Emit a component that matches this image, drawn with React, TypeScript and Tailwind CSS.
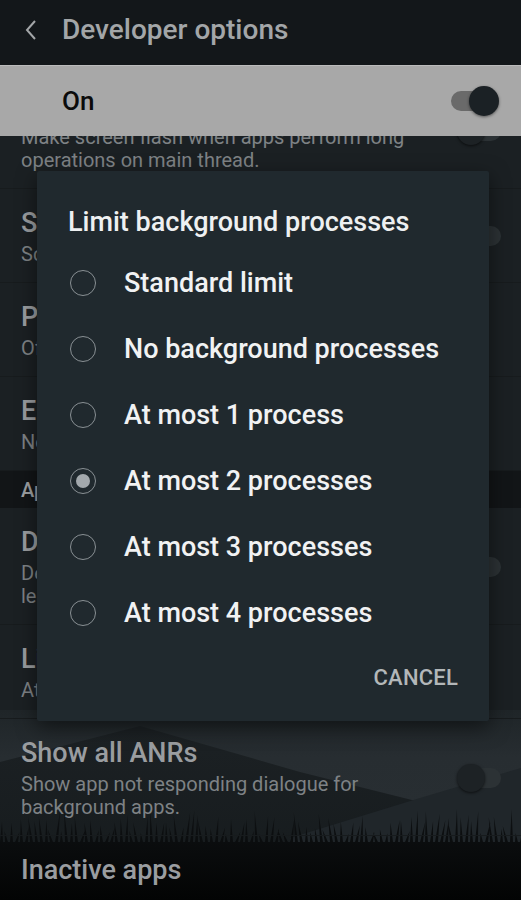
import React from "react";

type Row = { title: string; sub: string[]; toggle?: "off" | "none" };

const rowsTop: Row[] = [
  { title: "Strict mode enabled", sub: ["Make screen flash when apps perform long", "operations on main thread."], toggle: "off" },
  { title: "Show CPU usage", sub: ["Screen overlay showing current CPU usage"], toggle: "off" },
  { title: "Profile GPU rendering", sub: ["Off"], toggle: "none" },
  { title: "Enable OpenGL traces", sub: ["None"], toggle: "none" },
];

const rowsBottom: Row[] = [
  { title: "Don't keep activities", sub: ["Destroy every activity as soon as the user", "leaves it"], toggle: "off" },
  { title: "Limit background processes", sub: ["At most 2 processes"], toggle: "none" },
  { title: "Show all ANRs", sub: ["Show app not responding dialogue for", "background apps."], toggle: "off" },
  { title: "Inactive apps", sub: [], toggle: "none" },
];

const options = [
  "Standard limit",
  "No background processes",
  "At most 1 process",
  "At most 2 processes",
  "At most 3 processes",
  "At most 4 processes",
];

// thin grass blades along the bottom of the wallpaper
const grass = (() => {
  let d = "M0 190 L0 130 ";
  let seed = 7;
  const rnd = () => {
    seed = (seed * 9301 + 49297) % 233280;
    return seed / 233280;
  };
  for (let x = 0; x < 521; x += 5) {
    const h = 8 + rnd() * 26;
    const lean = (rnd() - 0.5) * 8;
    d += `L${x} 132 L${(x + 1.5 + lean).toFixed(1)} ${(132 - h).toFixed(1)} L${x + 3} 132 `;
  }
  d += "L521 130 L521 190 Z";
  return d;
})();

const SmallToggle = () => (
  <div className="relative w-[46px] h-[28px] shrink-0">
    <div className="absolute left-[6px] right-[2px] top-[4px] h-[20px] rounded-full bg-[#2c3235]" />
    <div className="absolute left-0 top-0 w-[28px] h-[28px] rounded-full bg-[#1d2225] shadow-[0_1px_3px_rgba(0,0,0,0.6)]" />
  </div>
);

const SettingRow = ({ row }: { row: Row }) => (
  <div className="flex items-center pl-[21px] pr-[18px] pt-[17px] pb-[16px] border-b border-[#171b1d]">
    <div className="flex-1 min-w-0">
      <div className="text-[27px] leading-[34px] font-medium text-[#9a9da0] whitespace-nowrap">{row.title}</div>
      {row.sub.length > 0 && (
        <div className="mt-[3px] text-[20px] leading-[23px] text-[#7e8285]">
          {row.sub.map((s, i) => (
            <div key={i} className="whitespace-nowrap">{s}</div>
          ))}
        </div>
      )}
    </div>
    {row.toggle === "off" && <SmallToggle />}
  </div>
);

const Radio = ({ checked }: { checked: boolean }) => (
  <div className="w-[26px] h-[26px] rounded-full border-[1.5px] border-[#899094] flex items-center justify-center shrink-0">
    {checked && <div className="w-[14px] h-[14px] rounded-full bg-[#a2a8ac]" />}
  </div>
);

export default function App() {
  return (
    <div className="relative w-[521px] h-[900px] overflow-hidden bg-[#1b2023] font-['Roboto',sans-serif]">
      {/* wallpaper under the list */}
      <svg className="absolute left-0 bottom-0" width="521" height="190" viewBox="0 0 521 190">
        <defs>
          <linearGradient id="sky" x1="0" y1="0" x2="0" y2="1">
            <stop offset="0" stopColor="#1f2528" />
            <stop offset="0.25" stopColor="#272d31" />
            <stop offset="1" stopColor="#2a3034" />
          </linearGradient>
          <linearGradient id="hill" x1="0" y1="0" x2="0" y2="1">
            <stop offset="0" stopColor="#1c2124" />
            <stop offset="1" stopColor="#151a1c" />
          </linearGradient>
          <linearGradient id="ground" x1="0" y1="0" x2="0" y2="1">
            <stop offset="0" stopColor="#0f1214" />
            <stop offset="1" stopColor="#030404" />
          </linearGradient>
        </defs>
        <rect width="521" height="190" fill="url(#sky)" />
        <polygon points="0,52 140,16 300,62 420,92 521,104 521,190 0,190" fill="url(#hill)" />
        <polygon points="290,128 420,88 521,58 521,190 290,190" fill="#20262a" />
        <path d={grass} fill="url(#ground)" />
      </svg>

      <div className="relative flex flex-col h-full">
        {/* header */}
        <div className="h-[65px] shrink-0 bg-[#13171a] flex items-center pb-[6px]">
          <svg className="ml-[24px]" width="14" height="22" viewBox="0 0 14 22">
            <path d="M11 2 L3 11 L11 20" fill="none" stroke="#a3a6a8" strokeWidth="2" />
          </svg>
          <div className="ml-[24px] text-[28px] font-medium text-[#a3a6a8] leading-none">Developer options</div>
        </div>

        {/* master switch */}
        <div className="h-[71px] shrink-0 bg-[#a8a8a8] border-t border-[#bcbcbc] flex items-center pl-[62px] pr-[22px]">
          <div className="flex-1 text-[26px] font-medium text-[#0b0b0b]">On</div>
          <div className="relative w-[48px] h-[30px]">
            <div className="absolute left-0 right-[4px] top-[5px] h-[20px] rounded-full bg-[#6a6a6a]" />
            <div className="absolute right-0 top-0 w-[30px] h-[30px] rounded-full bg-[#1b2125] shadow-[0_1px_3px_rgba(0,0,0,0.5)]" />
          </div>
        </div>

        {/* list */}
        <div className="flex-1 overflow-hidden">
          <div className="-mt-[64px]">
            {rowsTop.map((r, i) => (
              <SettingRow key={i} row={r} />
            ))}
            <div className="h-[37px] bg-[#121517] flex items-center pl-[21px] text-[20px] font-medium text-[#9ea1a3]">
              Apps
            </div>
            {rowsBottom.map((r, i) => (
              <SettingRow key={i} row={r} />
            ))}
          </div>
        </div>
      </div>

      {/* dialog */}
      <div className="absolute left-[37px] top-[171px] w-[452px] h-[550px] bg-[#20292e] rounded-[2px] shadow-[0_6px_20px_rgba(0,0,0,0.5)] flex flex-col">
        <div className="pt-[34px] pl-[31px] text-[27px] leading-[34px] font-medium text-[#eef0f1]">
          Limit background processes
        </div>
        <div className="mt-[11px] flex flex-col">
          {options.map((o, i) => (
            <div key={o} className="h-[66px] flex items-center pl-[33px]">
              <Radio checked={i === 3} />
              <span className="ml-[28px] text-[27px] font-medium text-[#f1f2f3]">{o}</span>
            </div>
          ))}
        </div>
        <div className="mt-[9px] h-[44px] flex items-center justify-end pr-[31px]">
          <span className="text-[22px] font-medium text-[#b3b7b9] tracking-[0.2px]">CANCEL</span>
        </div>
      </div>
    </div>
  );
}
